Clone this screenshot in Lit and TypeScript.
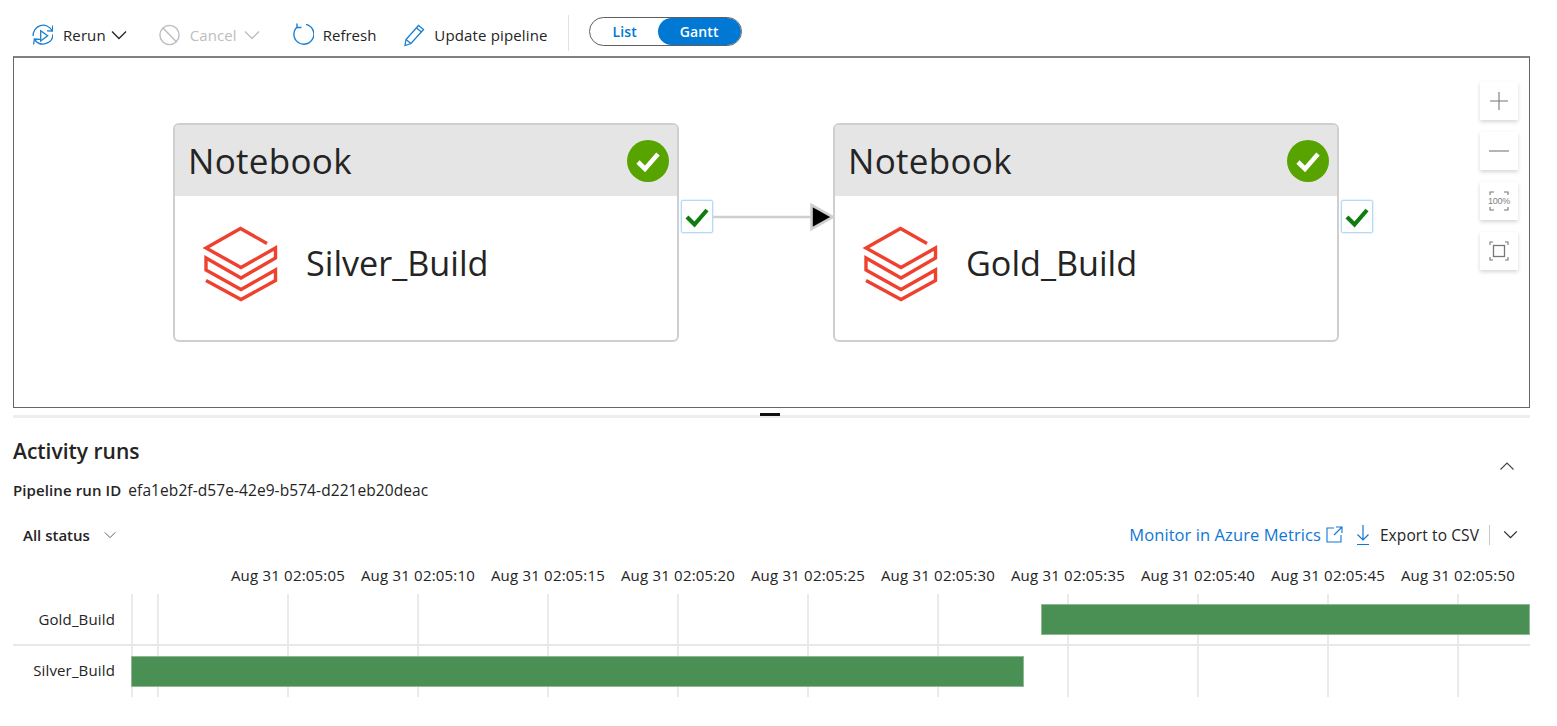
import { LitElement, html, css, svg } from 'lit';
import { customElement } from 'lit/decorators.js';

const chevronDown = html`<svg class="chev" viewBox="0 0 16 10" fill="none" stroke="currentColor" stroke-width="1.3"><path d="M1 1.5 8 8.5l7-7"/></svg>`;

const databricks = svg`<path d="M27 15.5 L0.5 0.5 L-34 20 L1 39.5 L35.5 20 V30 L1 50 L-34 30 V42 L1 61.5 L35.5 42 V52.5 L1 71.5 L-34 52.5" transform="translate(35 1)" fill="none" stroke="#ef4130" stroke-width="3.4"/>`;

const ticks = ['05', '10', '15', '20', '25', '30', '35', '40', '45', '50'];
const gridLines = [132, 158, 288, 418, 548, 678, 808, 938, 1068, 1198, 1328, 1458];

const nodes = [
  { name: 'Silver_Build', left: 159 },
  { name: 'Gold_Build', left: 819 },
];

const runs = [
  { name: 'Gold_Build', start: 1041, end: 1530 },
  { name: 'Silver_Build', start: 131, end: 1024 },
];

@customElement('app-root')
export class AppRoot extends LitElement {
  static styles = css`
    :host {
      display: block;
      width: 1557px;
      height: 726px;
      overflow: hidden;
      background: #fff;
      font-family: 'Open Sans', 'Noto Sans', sans-serif;
      color: #242424;
    }

    .toolbar {
      display: flex;
      align-items: center;
      height: 56px;
      padding: 13px 0 0 32px;
      box-sizing: border-box;
      font-size: 15px;
      letter-spacing: 0.1px;
    }

    .tool {
      display: flex;
      align-items: center;
      gap: 10px;
      margin-right: 28px;
      white-space: nowrap;
    }

    .tool svg.icon { width: 21px; height: 24px; flex: none; }
    .tool .chev { width: 16px; height: 10px; margin-left: -5px; }
    .tool.rerun { margin-right: 32px; }
    .tool.disabled { color: #bdbdbd; margin-right: 33px; }
    .tool.disabled .chev { margin-left: -3px; }
    .tool.refresh { gap: 9px; letter-spacing: 0; }
    .tool.update { gap: 9px; }
    .tool.update span { letter-spacing: 0.15px; }
    .divider { width: 1px; height: 36px; background: #e1e1e1; margin: -4px 20px 0 -8px; }

    .toggle {
      display: flex;
      width: 153px;
      height: 29px;
      margin-top: -6px;
      border: 1px solid #605e5c;
      border-radius: 15px;
      box-sizing: border-box;
      overflow: hidden;
      font-size: 14px;
      font-weight: 600;
    }
    .toggle span { display: flex; align-items: center; justify-content: center; color: #0078d4; }
    .toggle .list { width: 68px; padding-left: 2px; box-sizing: border-box; }
    .toggle .gantt { flex: 1; background: #0078d4; color: #fff; border-radius: 15px; }

    .canvas {
      position: relative;
      height: 352px;
      margin: 0 27px 0 13px;
      border: 1.5px solid #666;
      border-top: 2px solid #808080;
      box-sizing: border-box;
    }

    .node {
      position: absolute;
      top: 65px;
      width: 506px;
      height: 219px;
      border: 2px solid #cfcfcf;
      border-radius: 6px;
      box-sizing: border-box;
      overflow: hidden;
    }

    .node-head {
      display: flex;
      align-items: center;
      justify-content: space-between;
      height: 71px;
      padding: 0 8px 0 13px;
      background: #e5e5e5;
      font-size: 35px;
      letter-spacing: 0.3px;
    }

    .node-head svg { width: 42px; height: 42px; }

    .node-body {
      display: flex;
      align-items: center;
      gap: 27px;
      padding: 31px 0 0 30px;
      font-size: 34.2px;
    }

    .node-body svg { width: 74px; height: 76px; overflow: visible; flex: none; }
    .node-body span { margin-top: -6px; }

    .port {
      position: absolute;
      top: 142px;
      display: flex;
      align-items: center;
      justify-content: center;
      width: 32px;
      height: 33px;
      background: #fff;
      border: 1.5px solid #b5daf8;
      border-radius: 2px;
      box-sizing: border-box;
      box-shadow: 0 0 2px #a9d4f5;
    }
    .port svg { width: 24px; height: 22px; }

    .link {
      position: absolute;
      left: 699px;
      top: 145px;
      width: 122px;
      height: 28px;
    }

    .zoom {
      position: absolute;
      right: 11px;
      top: 24px;
      display: flex;
      flex-direction: column;
      gap: 12px;
    }

    .zoom button {
      position: relative;
      display: flex;
      align-items: center;
      justify-content: center;
      width: 38px;
      height: 38px;
      padding: 0;
      background: #fff;
      border: none;
      box-shadow: 0 1.5px 4px rgba(0, 0, 0, 0.16);
      color: #808080;
    }
    .zoom svg { width: 20px; height: 20px; }
    .zoom .pct { position: absolute; font-family: 'Liberation Sans', sans-serif; font-size: 9px; letter-spacing: -0.2px; }

    .splitter {
      position: relative;
      height: 3px;
      margin: 7px 27px 0 13px;
      background: #eeeeee;
    }
    .splitter i {
      position: absolute;
      left: 747px;
      top: -2px;
      width: 20px;
      height: 3px;
      background: #111;
    }

    .runs { padding: 19px 27px 0 13px; }

    .runs-head {
      display: flex;
      justify-content: space-between;
      align-items: flex-start;
    }

    h2 {
      margin: 0;
      font-size: 21px;
      line-height: 28px;
      font-weight: 600;
    }

    .collapse { width: 16px; height: 10px; margin: 24px 15px -10px 0; color: #444; }

    .run-id {
      display: flex;
      gap: 7px;
      margin-top: 15px;
      font-size: 15px;
      line-height: 20px;
    }
    .run-id b { font-weight: 600; letter-spacing: 0.1px; }
    .run-id span { font-size: 15.5px; letter-spacing: 0.08px; }

    .filter-row {
      display: flex;
      justify-content: space-between;
      align-items: center;
      height: 32px;
      margin-top: 18.5px;
      padding: 0 12px 0 10px;
    }

    .status {
      display: flex;
      align-items: center;
      gap: 14px;
      font-size: 15px;
      font-weight: 600;
    }
    .status svg { width: 12px; height: 8px; color: #605e5c; }

    .actions { display: flex; align-items: center; font-size: 15.5px; letter-spacing: 0.1px; }
    .monitor { color: #0f78d4; font-size: 16.5px; letter-spacing: 0.08px; }
    .actions svg.ext { width: 17px; height: 17px; margin: 0 13px 0 5px; color: #0f78d4; }
    .actions svg.down { width: 14px; height: 20px; margin-right: 10px; color: #0f78d4; }
    .actions .sep { width: 1px; height: 20px; margin: 0 13px 0 10px; background: #c8c8c8; }
    .actions svg.chev { width: 15px; height: 9px; }

    .axis {
      display: grid;
      grid-template-columns: repeat(10, 130px);
      margin: 14.5px 0 0 210px;
      font-size: 15px;
      letter-spacing: 0.2px;
      line-height: 20px;
      text-align: center;
      white-space: nowrap;
    }

    .chart {
      position: relative;
      height: 103px;
      margin-top: 9px;
    }

    .grid-line {
      position: absolute;
      top: 0;
      bottom: 0;
      width: 2px;
      background: #ebebeb;
    }

    .row {
      position: relative;
      display: flex;
      align-items: center;
      justify-content: flex-end;
      width: 102px;
      height: 49px;
      font-size: 15px;
      letter-spacing: 0.15px;
    }
    .bar + .row { height: 53px; }

    .rule {
      position: absolute;
      left: 0;
      right: 0;
      top: 50px;
      height: 2px;
      background: #e8e8e8;
    }

    .bar {
      position: absolute;
      height: 31px;
      background: #4a8f53;
      border: 1px solid #8db893;
      box-sizing: border-box;
    }
  `;

  private renderNode(node: { name: string; left: number }) {
    return html`
      <div class="node" style="left: ${node.left}px">
        <div class="node-head">
          <span>Notebook</span>
          <svg viewBox="0 0 42 42">
            <circle cx="21" cy="21" r="21" fill="#57a300"/>
            <path d="M11 22l7 7 13-15" fill="none" stroke="#fff" stroke-width="4.6"/>
          </svg>
        </div>
        <div class="node-body">
          <svg viewBox="0 0 74 76">${databricks}</svg>
          <span>${node.name}</span>
        </div>
      </div>
    `;
  }

  private renderPort(left: number) {
    return html`
      <div class="port" style="left: ${left}px">
        <svg viewBox="0 0 24 22"><path d="M2 11l7.5 7.5L22 4" fill="none" stroke="#107c10" stroke-width="4.2"/></svg>
      </div>
    `;
  }

  render() {
    return html`
      <div class="toolbar">
        <div class="tool rerun">
          <svg class="icon" viewBox="0 0 21 24" fill="none" stroke="#1a7fd0" stroke-width="1.3">
            <path d="M1.2 13A10 10 0 0 1 20 7.5"/>
            <path d="M21 11A10 10 0 0 1 3 17"/>
            <path d="M20.7 2.5 20.4 8 15 7.8M1.6 21.5 2.4 16 8 16.3"/>
            <path d="M8.7 7.7V18l7-5.3z"/>
          </svg>
          <span>Rerun</span>${chevronDown}
        </div>
        <div class="tool disabled">
          <svg class="icon" viewBox="0 0 21 24" fill="none" stroke="#bdbdbd" stroke-width="1.4">
            <circle cx="10.5" cy="12" r="9.6"/><path d="M4 5l13.5 14"/>
          </svg>
          <span>Cancel</span>${chevronDown}
        </div>
        <div class="tool refresh">
          <svg class="icon" viewBox="0 0 21 24" fill="none" stroke="#1a7fd0" stroke-width="1.4">
            <path d="M13 1.4A10 10 0 1 1 3.7 4.2"/><path d="M4 0.5v4h4.5"/>
          </svg>
          <span>Refresh</span>
        </div>
        <div class="tool update">
          <svg class="icon" viewBox="0 0 21 24" fill="none" stroke="#1a7fd0" stroke-width="1.3">
            <path d="M1 22.5l1-6L14.5 2.5l5 4L7 20.5z"/><path d="M2 16.5l5 4M12.5 5l5 4"/>
          </svg>
          <span>Update pipeline</span>
        </div>
        <div class="divider"></div>
        <div class="toggle"><span class="list">List</span><span class="gantt">Gantt</span></div>
      </div>

      <div class="canvas">
        ${nodes.map((n) => this.renderNode(n))}
        ${this.renderPort(667)}
        ${this.renderPort(1327)}
        <svg class="link" viewBox="0 0 122 28">
          <path d="M0 14H98" stroke="#cfcfcf" stroke-width="2.5"/>
          <path d="M98.5 2 120 14 98.5 26z" fill="#000" stroke="#cfcfcf" stroke-width="2.6"/>
        </svg>
        <div class="zoom">
          <button><svg viewBox="0 0 20 20" fill="none" stroke="#777" stroke-width="1.1"><path d="M10 1v18M1 10h18"/></svg></button>
          <button><svg viewBox="0 0 20 20" fill="none" stroke="#777" stroke-width="1.1"><path d="M0 10h20"/></svg></button>
          <button>
            <svg viewBox="0 0 20 20" fill="none" stroke="#777" stroke-width="1.1"><path d="M1 4V1h4M15 1h4v3M1 16v3h4M15 19h4v-3"/></svg>
            <span class="pct">100%</span>
          </button>
          <button><svg viewBox="0 0 20 20" fill="none" stroke="#777" stroke-width="1.1"><path d="M1 4V1h3M16 1h3v3M1 16v3h3M16 19h3v-3"/><rect x="4.5" y="4.5" width="11" height="11" stroke-width="1.3"/></svg></button>
        </div>
      </div>

      <div class="splitter"><i></i></div>

      <section class="runs">
        <div class="runs-head">
          <h2>Activity runs</h2>
          <svg class="collapse" viewBox="0 0 16 10" fill="none" stroke="currentColor" stroke-width="1.1"><path d="M1.5 8.5 8 2l6.5 6.5"/></svg>
        </div>
        <div class="run-id"><b>Pipeline run ID</b><span>efa1eb2f-d57e-42e9-b574-d221eb20deac</span></div>

        <div class="filter-row">
          <div class="status">All status ${chevronDown}</div>
          <div class="actions">
            <span class="monitor">Monitor in Azure Metrics</span>
            <svg class="ext" viewBox="0 0 17 17" fill="none" stroke="currentColor" stroke-width="1.1"><path d="M8 2H1v14h14V9M10 1h6v6M16 1 8 9"/></svg>
            <svg class="down" viewBox="0 0 14 20" fill="none" stroke="currentColor" stroke-width="1.2"><path d="M7 0v15M1.5 9.5 7 15l5.5-5.5M1 19.5h12"/></svg>
            <span>Export to CSV</span>
            <i class="sep"></i>
            ${chevronDown}
          </div>
        </div>

        <div class="axis">
          ${ticks.map((t) => html`<span>Aug 31 02:05:${t}</span>`)}
        </div>

        <div class="chart">
          ${gridLines.map((x) => html`<div class="grid-line" style="left: ${x - 14}px"></div>`)}
          <div class="rule"></div>
          ${runs.map(
            (r, i) => html`
              <div class="row">${r.name}</div>
              <div class="bar" style="left: ${r.start - 13}px; width: ${r.end - r.start}px; top: ${10 + i * 52}px"></div>
            `,
          )}
        </div>
      </section>
    `;
  }
}
